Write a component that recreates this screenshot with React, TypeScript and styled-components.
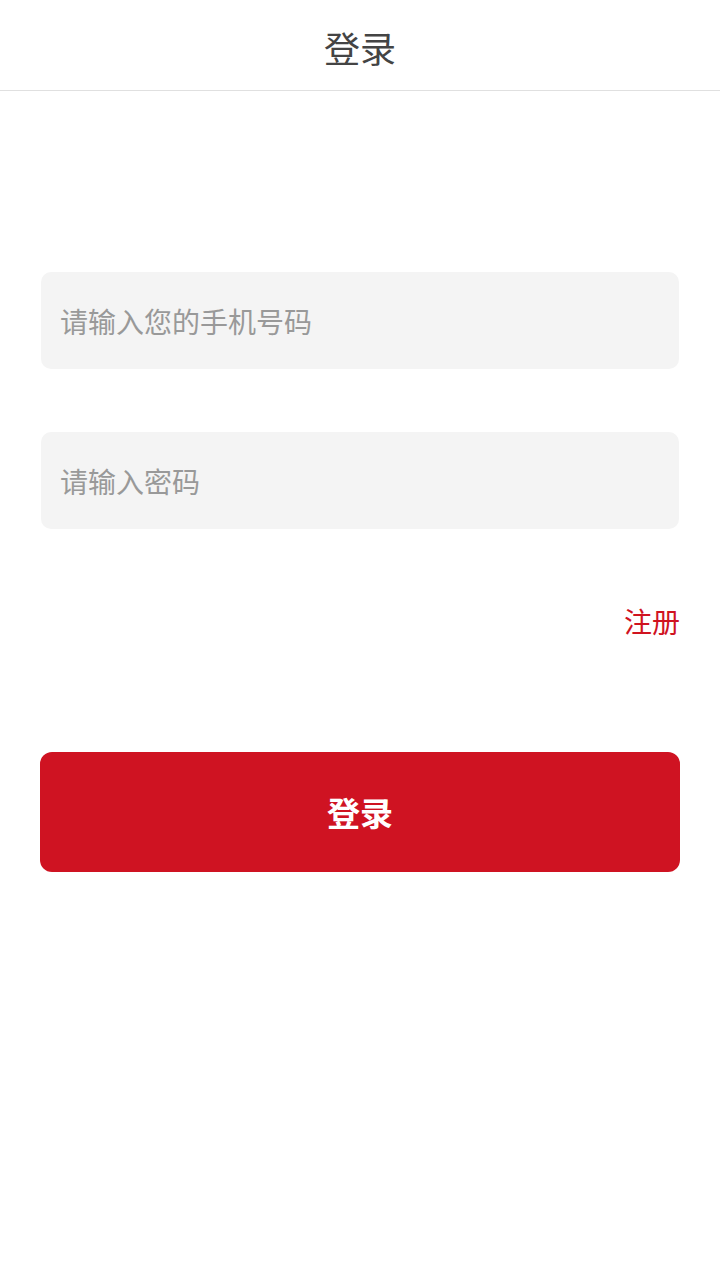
import React from "react";
import styled, { createGlobalStyle } from "styled-components";

const GlobalStyle = createGlobalStyle`
	html, body {
		margin: 0;
		padding: 0;
		background: #fff;
		font-family: "Noto Sans CJK SC", "Noto Sans", sans-serif;
	}
`;

const App: React.FC = () => {
	return (
		<>
			<GlobalStyle />
			<Page>
				<Header>
					<Title>登录</Title>
				</Header>
				<Form>
					<Field placeholder="请输入您的手机号码" type="tel" />
					<Field placeholder="请输入密码" type="password" />
					<LinkRow>
						<RegisterLink href="#">注册</RegisterLink>
					</LinkRow>
					<SubmitButton type="button">登录</SubmitButton>
				</Form>
			</Page>
		</>
	);
};

export default App;

const Page = styled.div`
	width: 720px;
	min-height: 1280px;
	background: #fff;
`;

const Header = styled.div`
	height: 91px;
	border-bottom: 1px solid #e0e0e0;
	display: flex;
	justify-content: center;
	align-items: center;
	box-sizing: border-box;
`;

const Title = styled.div`
	color: #444;
	font-size: 36px;
	line-height: 1;
	margin-top: 4px;
`;

const Form = styled.div`
	padding: 181px 40px 0 40px;
	display: flex;
	flex-direction: column;
`;

const Field = styled.input`
	box-sizing: border-box;
	height: 97px;
	margin: 0 1px 63px 1px;
	padding: 0 19px;
	border: none;
	outline: none;
	border-radius: 10px;
	background: #f4f4f4;
	font-family: "Noto Sans CJK SC", "Noto Sans", sans-serif;
	font-size: 28px;
	color: #333;
	&::placeholder {
		color: #999;
	}
`;

const LinkRow = styled.div`
	display: flex;
	justify-content: flex-end;
	margin-top: 9px;
`;

const RegisterLink = styled.a`
	color: #d0131f;
	font-size: 28px;
	line-height: 40px;
	text-decoration: none;
`;

const SubmitButton = styled.button`
	margin-top: 111px;
	height: 120px;
	border: none;
	border-radius: 12px;
	background: #cf1322;
	color: #fff;
	font-family: "Noto Sans CJK SC", "Noto Sans", sans-serif;
	font-size: 33px;
	font-weight: 600;
	cursor: pointer;
`;
